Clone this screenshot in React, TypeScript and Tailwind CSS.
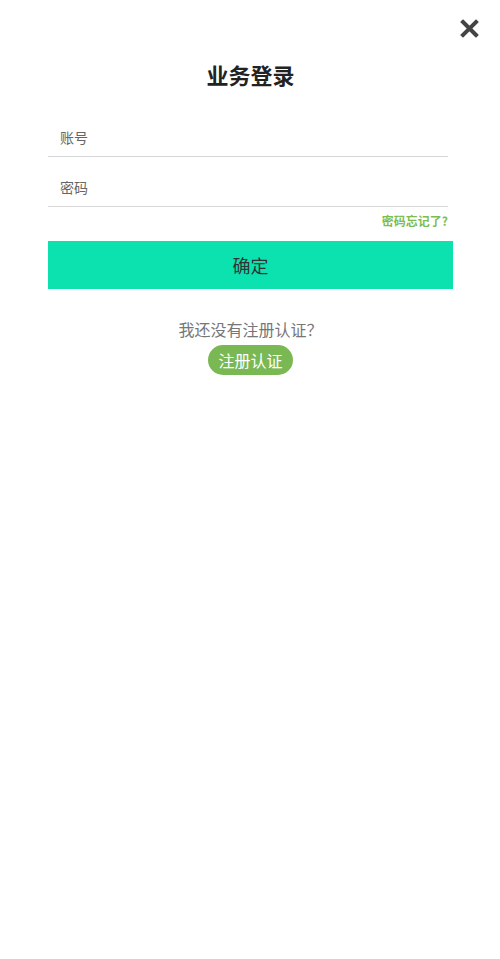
export default function App() {
  return (
    <main
      className="relative min-h-[959px] w-[500px] bg-white"
      style={{ fontFamily: '"Noto Sans CJK SC", "Noto Sans", sans-serif' }}
    >
      {/* close */}
      <button className="absolute right-[21px] top-[19px] text-[#444]" aria-label="close">
        <svg width="19" height="19" viewBox="0 0 19 19">
          <path d="M3 3 L16 16 M16 3 L3 16" stroke="currentColor" strokeWidth="4" strokeLinecap="square" />
        </svg>
      </button>

      <div className="flex flex-col pl-12 pt-[58px]">
        <h1 className="w-[405px] text-center text-[22px] font-bold leading-8 text-[#222]">业务登录</h1>

        <div className="mt-[31px] flex h-9 w-[400px] items-center border-b border-[#d6d6d6] px-3 pb-[3px]">
          <input
            className="w-full bg-transparent text-sm text-[#555] outline-none placeholder:text-[#666]"
            placeholder="账号"
          />
        </div>
        <div className="mt-[14px] flex h-9 w-[400px] items-center border-b border-[#d6d6d6] px-3 pb-[3px]">
          <input
            type="password"
            className="w-full bg-transparent text-sm text-[#555] outline-none placeholder:text-[#666]"
            placeholder="密码"
          />
        </div>
        <div className="w-[400px] pt-[6px] text-right text-xs font-bold leading-4 text-[#7dbd4f]">密码忘记了?</div>

        <button className="mt-[12px] h-12 w-[405px] bg-[#0be2b0] text-lg text-[#333]">确定</button>

        <div className="mt-[28px] flex w-[405px] flex-col items-center">
          <p className="text-base leading-6 text-[#777]">我还没有注册认证？</p>
          <button className="mt-[4px] h-[30px] rounded-full bg-[#7ab854] px-[10px] text-base text-white">
            注册认证
          </button>
        </div>
      </div>
    </main>
  );
}
